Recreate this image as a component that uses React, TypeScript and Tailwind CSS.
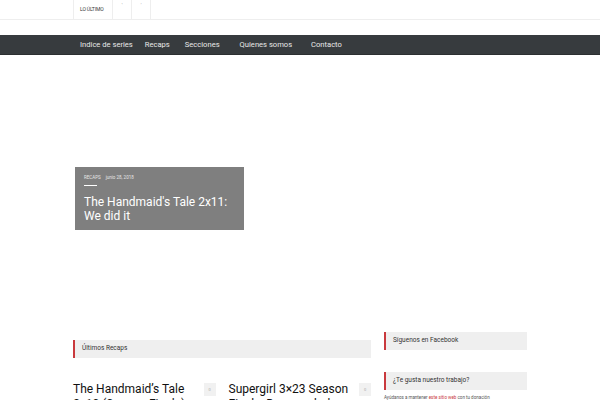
export default function App() {
  return (
    <div className="w-[600px] h-[400px] overflow-hidden bg-white font-['Roboto',sans-serif]">
      {/* barra superior */}
      <div className="h-[20px] border-b border-[#eeeeee]">
        <div className="w-[454px] mx-auto flex h-full">
          <div className="w-[40px] border-l border-r border-[#eeeeee] flex items-center pl-[6px]">
            <span className="text-[5px] text-[#333] tracking-tight">LO ÚLTIMO</span>
          </div>
          <div className="w-[19px] border-r border-[#eeeeee] flex justify-center">
            <span className="text-[4px] text-[#999] leading-none mt-[2px]">‹</span>
          </div>
          <div className="w-[19px] border-r border-[#eeeeee] flex justify-center">
            <span className="text-[4px] text-[#999] leading-none mt-[2px]">›</span>
          </div>
        </div>
      </div>

      {/* menú */}
      <div className="mt-[15px] h-[20px] bg-[#373b3e] border-b border-[#2c2f31]">
        <div className="w-[454px] mx-auto flex items-center h-full pl-[7px] text-[7.6px] text-[#e8e8e8]">
          <span>Indice de series</span>
          <span className="ml-[12px]">Recaps</span>
          <span className="ml-[15px]">Secciones</span>
          <span className="ml-[20px]">Quienes somos</span>
          <span className="ml-[19px]">Contacto</span>
        </div>
      </div>

      {/* destacado */}
      <div className="h-[277px] pt-[112px]">
        <div className="w-[454px] mx-auto">
          <div className="ml-[2px] w-[169px] h-[63px] bg-[#7f7f7f] px-[9px] pt-[9px]">
            <div className="flex items-center gap-[5px] text-[4.5px] text-[#e6e6e6] leading-none">
              <span>RECAPS</span>
              <span>junio 28, 2018</span>
            </div>
            <div className="mt-[4px] w-[13px] h-px bg-white" />
            <div className="mt-[9px] text-[12px] leading-[14px] text-white">
              The Handmaid's Tale 2x11: We did it
            </div>
          </div>
        </div>
      </div>

      {/* contenido */}
      <div className="w-[454px] mx-auto flex gap-[13px]">
        <div className="w-[298px] pt-[8px]">
          <div className="h-[18px] bg-[#efefef] border-l-2 border-[#c9393d] flex items-center pl-[7px]">
            <span className="text-[6.5px] text-[#333]">Últimos Recaps</span>
          </div>
          <div className="mt-[24px] grid grid-cols-2 gap-[13px]">
            <div className="flex gap-[6px]">
              <div className="flex-1 text-[12px] leading-[15px] text-[#111]">
                The Handmaid’s Tale 2x10 (Season Finale): The Word
              </div>
              <div className="w-[12px] h-[13px] bg-[#f1f1f1] flex items-center justify-center text-[4px] text-[#aaa] mt-[1px]">0</div>
            </div>
            <div className="flex gap-[6px]">
              <div className="flex-1 text-[12px] leading-[15px] text-[#111]">
                Supergirl 3×23 Season Finale: Desenredados
              </div>
              <div className="w-[12px] h-[13px] bg-[#f1f1f1] flex items-center justify-center text-[4px] text-[#aaa] mt-[1px]">0</div>
            </div>
          </div>
        </div>

        <div className="w-[143px]">
          <div className="h-[18px] bg-[#efefef] border-l-2 border-[#c9393d] flex items-center pl-[7px]">
            <span className="text-[6.5px] text-[#333]">Síguenos en Facebook</span>
          </div>
          <div className="mt-[22px] h-[18px] bg-[#efefef] border-l-2 border-[#c9393d] flex items-center pl-[7px]">
            <span className="text-[6.5px] text-[#333]">¿Te gusta nuestro trabajo?</span>
          </div>
          <div className="mt-[4px] text-[4.5px] text-[#555] leading-[7px] whitespace-nowrap">
            Ayúdanos a mantener <span className="text-[#c9393d]">este sitio web</span> con tu donación
          </div>
        </div>
      </div>
    </div>
  );
}
